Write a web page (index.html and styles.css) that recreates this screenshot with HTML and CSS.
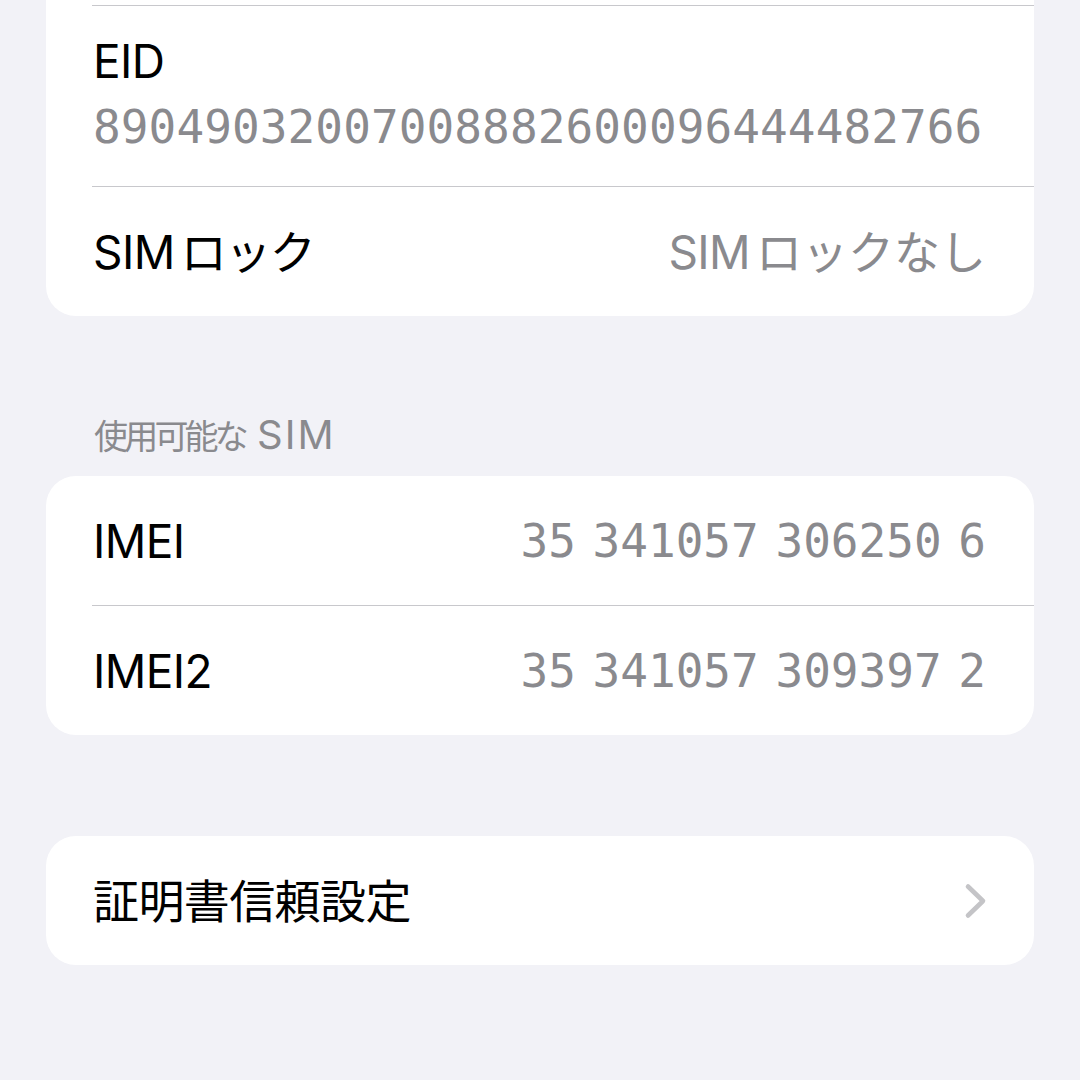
FILE: index.html
```html
<!DOCTYPE html>
<html lang="ja">
<head>
<meta charset="utf-8">
<link rel="stylesheet" href="styles.css">
</head>
<body>
<div class="page">
  <div class="card card-cut">
    <div class="stub"></div>
    <div class="sep"></div>
    <div class="row row-eid">
      <div class="label">EID</div>
      <div class="mono eid">89049032007008882600096444482766</div>
    </div>
    <div class="sep"></div>
    <div class="row">
      <div class="label"><span class="lat">SIM</span><span class="jp">ロック</span></div>
      <div class="value"><span class="lat">SIM</span><span class="jp-val">ロックなし</span></div>
    </div>
  </div>

  <div class="section-header"><span class="hjp">使用可能な</span><span class="hlat">SIM</span></div>

  <div class="card">
    <div class="row">
      <div class="label">IMEI</div>
      <div class="mono imei">35 341057 306250 6</div>
    </div>
    <div class="sep"></div>
    <div class="row">
      <div class="label">IMEI2</div>
      <div class="mono imei">35 341057 309397 2</div>
    </div>
  </div>

  <div class="card card-last">
    <div class="row">
      <div class="label">証明書信頼設定</div>
      <svg class="chevron" width="24" height="36" viewBox="0 0 24 36">
        <path d="M4 3.5 L19 18 L4 32.5" fill="none" stroke="#c4c4c7" stroke-width="4.6" stroke-linecap="round" stroke-linejoin="round"/>
      </svg>
    </div>
  </div>
</div>
</body>
</html>
```

FILE: styles.css
```css
html, body {
  margin: 0;
  padding: 0;
  background: #f2f2f7;
}

body {
  width: 1080px;
  height: 1080px;
  overflow: hidden;
  font-family: "Inter", "Noto Sans CJK JP", sans-serif;
  -webkit-font-smoothing: antialiased;
}

.page {
  display: flex;
  flex-direction: column;
  padding: 0 46px;
}

.card {
  background: #ffffff;
  border-radius: 30px;
  display: flex;
  flex-direction: column;
}

.card-cut {
  border-top-left-radius: 0;
  border-top-right-radius: 0;
}

.stub {
  height: 5px;
}

.sep {
  height: 1px;
  background: #c8c8cc;
  margin-left: 46px;
}

.row {
  height: 129px;
  display: flex;
  align-items: center;
  justify-content: space-between;
  padding: 0 48px 0 47px;
}

.row-eid {
  height: 180px;
  flex-direction: column;
  align-items: flex-start;
  justify-content: flex-start;
  padding-top: 25px;
  box-sizing: border-box;
}

.label {
  font-size: 46px;
  color: #000000;
  letter-spacing: -0.6px;
  line-height: 60px;
}

.value {
  font-size: 46px;
  color: #8a8a8e;
  letter-spacing: -0.6px;
  line-height: 60px;
}

.lat {
  margin-right: 6px;
}

.jp {
  letter-spacing: -1.5px;
}

.jp-val {
  letter-spacing: 0;
}

.mono {
  font-family: "DejaVu Sans Mono", monospace;
  font-size: 46px;
  color: #8a8a8e;
  line-height: 60px;
}

.eid {
  margin-top: 6px;
  letter-spacing: 0.1px;
}

.imei {
  word-spacing: -11px;
}

.section-header {
  margin-top: 94px;
  height: 50px;
  line-height: 50px;
  padding-left: 48px;
  color: #8a8a8e;
  margin-bottom: 16px;
}

.hjp {
  font-size: 34px;
  letter-spacing: -3.8px;
}

.hlat {
  font-size: 40px;
  letter-spacing: 2px;
  margin-left: 12px;
}

.card-last {
  margin-top: 101px;
}

.chevron {
  display: block;
  margin-right: -2px;
}
```
